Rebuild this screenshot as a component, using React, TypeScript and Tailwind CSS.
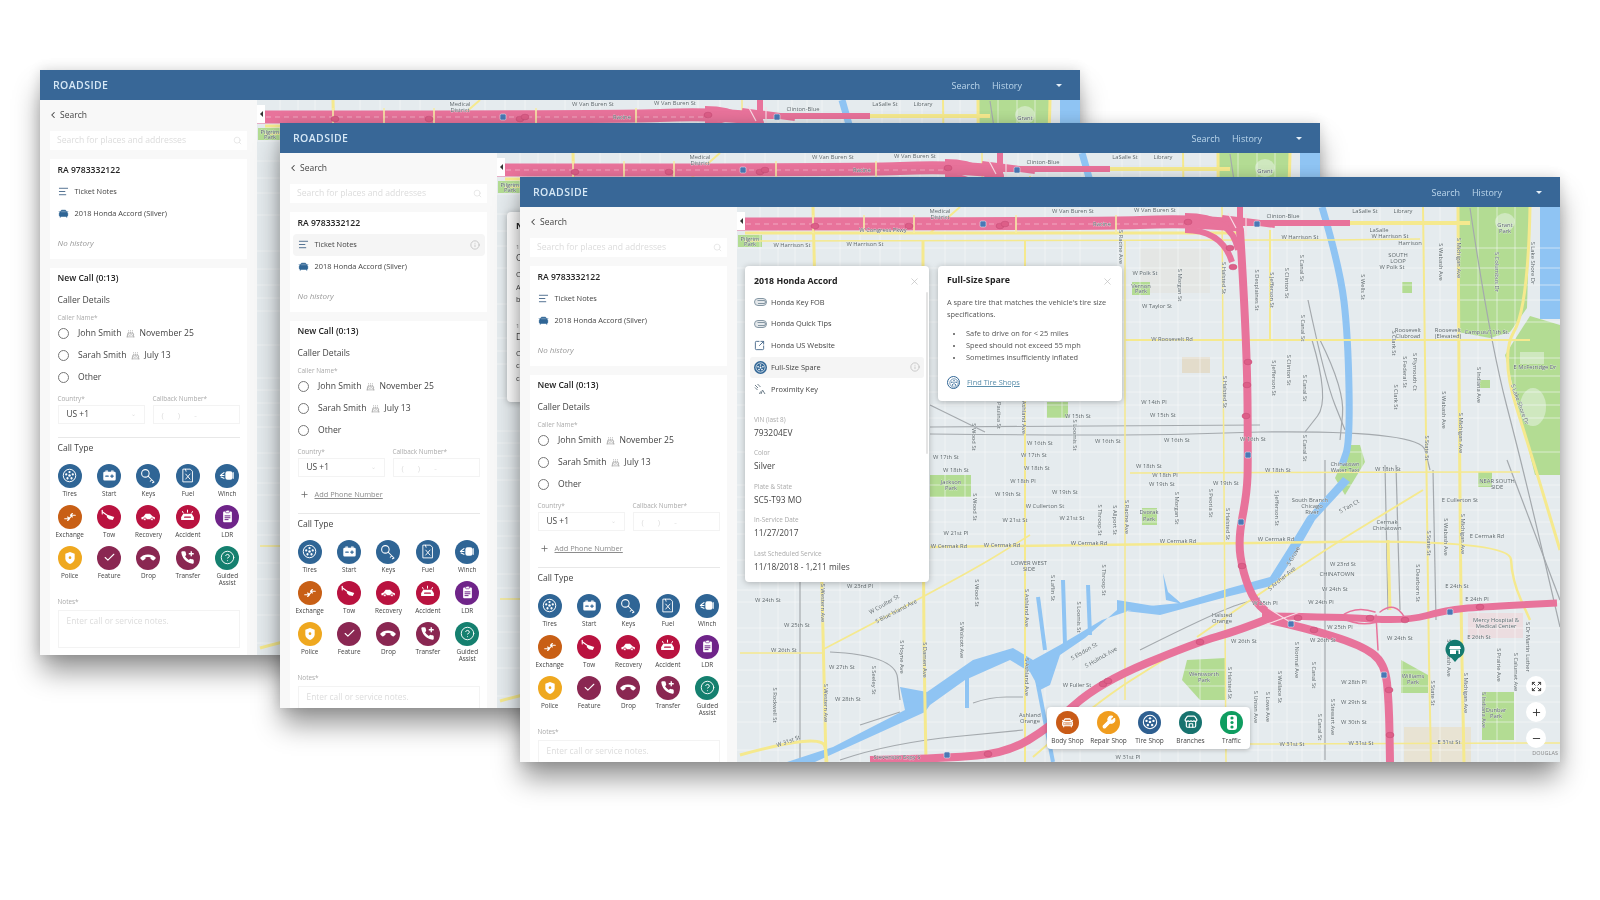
import React from 'react';
import { AlignLeft, CarFront, Cake, ChevronLeft, Check, CircleHelp, Expand, Minus, Plus, Search, Store, SquareArrowOutUpRight, Wrench, X, Info } from 'lucide-react';

const PHONE = 'M22 16.9v3a2 2 0 0 1-2.2 2 19.8 19.8 0 0 1-8.6-3.1 19.5 19.5 0 0 1-6-6 19.8 19.8 0 0 1-3.1-8.7A2 2 0 0 1 4.1 2h3a2 2 0 0 1 2 1.7c.1 1 .4 1.9.7 2.8a2 2 0 0 1-.5 2.1L8.1 9.9a16 16 0 0 0 6 6l1.3-1.3a2 2 0 0 1 2.1-.4c.9.3 1.8.5 2.8.7a2 2 0 0 1 1.7 2z';

function smooth(pts: number[][]) {
  let d = `M${pts[0][0]} ${pts[0][1]}`;
  for (let i = 1; i < pts.length - 1; i++) {
    const mx = (pts[i][0] + pts[i + 1][0]) / 2;
    const my = (pts[i][1] + pts[i + 1][1]) / 2;
    d += ` Q${pts[i][0]} ${pts[i][1]} ${mx} ${my}`;
  }
  const last = pts[pts.length - 1];
  return `${d} L${last[0]} ${last[1]}`;
}

// all map geometry uses the page coordinates of the front window
const WHITE_V = [760, 778, 795, 840, 860, 880, 900, 945, 965, 985, 1005, 1045, 1062, 1080, 1118, 1140, 1160, 1178, 1200, 1258, 1272, 1287, 1302, 1322, 1362, 1380, 1402, 1440, 1478, 1497, 1515];
const WHITE_H = [248, 268, 285, 300, 322, 358, 376, 392, 405, 418, 452, 485, 497, 510, 522, 534, 560, 575, 590, 602, 628, 642, 670, 686, 702, 722, 750];
const YELLOW: [number[][], number][] = [
  [[[745, 233], [1240, 233]], 3],
  [[[1350, 223], [1470, 223]], 4],
  [[[745, 241], [1240, 241], [1420, 239]], 1.5],
  [[[1125, 340], [1400, 340], [1530, 340]], 2],
  [[[930, 547], [1140, 545], [1510, 539], [1512, 580], [1530, 620]], 2.5],
  [[[1130, 473], [1440, 472], [1520, 472]], 1.5],
  [[[1458, 207], [1460, 560], [1464, 762]], 3],
  [[[1222, 207], [1226, 762]], 1.5],
  [[[1423, 207], [1427, 560], [1431, 762]], 2],
  [[[813, 207], [822, 590], [826, 762]], 3],
  [[[923, 240], [923, 590], [926, 762]], 3],
  [[[960, 207], [930, 233]], 2],
  [[[1025, 240], [1025, 762]], 2],
  [[[1125, 240], [1125, 700]], 1.5],
  [[[1270, 230], [1270, 340]], 2],
  [[[1530, 207], [1528, 308], [1500, 355], [1533, 460], [1560, 550]], 3],
  [[[740, 755], [823, 732], [827, 762]], 3],
  [[[822, 650], [960, 578], [1030, 535]], 1.5],
  [[[740, 653], [825, 653]], 1.5],
  [[[1197, 637], [1303, 563], [1423, 490]], 2],
  [[[1033, 757], [1095, 703], [1168, 657]], 2],
  [[[1250, 744], [1560, 743]], 1.5],
  [[[1388, 540], [1390, 610]], 3],
];
const RAIL: number[][][] = [
  [[930, 427], [1260, 425]],
  [[930, 434], [1120, 436], [1260, 432]],
  [[930, 405], [985, 432]],
  [[1140, 650], [1220, 610], [1260, 598]],
  [[1325, 460], [1325, 760]],
  [[1385, 465], [1388, 610]],
  [[1396, 465], [1400, 610]],
  [[1433, 470], [1436, 620]],
  [[1470, 208], [1490, 342], [1523, 468], [1560, 627]],
  [[1507, 460], [1560, 600]],
  [[1308, 300], [1325, 380], [1345, 430]],
  [[1312, 340], [1330, 400], [1305, 432]],
  [[1320, 340], [1345, 390], [1340, 440]],
  [[800, 580], [800, 760]],
  [[840, 760], [890, 743], [1023, 730]],
  [[860, 725], [900, 712]],
  [[973, 703], [990, 697], [1023, 697]],
  [[830, 652], [895, 655], [900, 700]],
  [[1260, 432], [1420, 430], [1430, 470]],
];
const BLUE: number[][][] = [
  [[1322, 207], [1340, 268], [1348, 335], [1350, 442], [1342, 465]],
  [[1038, 597], [1045, 650]],
  [[1063, 580], [1065, 645]],
  [[1088, 585], [1090, 635]],
  [[967, 677], [967, 708]],
  [[1037, 680], [1053, 762]],
];
const LABELS: [number, number, string, number?][] = [
  [1155, 212, 'W Van Buren St'], [1073, 213, 'W Van Buren St'], [940, 213, 'Medical'], [940, 219, 'District'], [1102, 226, 'Racine'], [1403, 213, 'Library'], [1365, 213, 'LaSalle St'], [883, 232, 'W Congress Pkwy'], [792, 247, 'W Harrison St'], [865, 246, 'W Harrison St'], [1283, 218, 'Clinton-Blue'], [1300, 239, 'W Harrison St'], [1390, 238, 'W Harrison St'], [1379, 232, 'LaSalle'], [1410, 245, 'Harrison'], [1398, 257, 'SOUTH'], [1398, 263, 'LOOP'], [1392, 269, 'W Polk St'], [1145, 275, 'W Polk St'], [1157, 308, 'W Taylor St'], [1172, 341, 'W Roosevelt Rd'], [1408, 332, 'Roosevelt'], [1408, 338, 'Clubroad'], [1448, 332, 'Roosevelt'], [1448, 338, '(Elevated)'], [1487, 334, 'Campus/11th St.'], [1535, 369, 'E McFetridge Dr'], [1505, 227, 'Grant'], [1505, 233, 'Park'], [1154, 404, 'W 14th Pl'], [1163, 417, 'W 15th St'], [1177, 442, 'W 16th St'], [1253, 441, 'W 16th St'], [1149, 468, 'W 18th St'], [1278, 472, 'W 18th St'], [1388, 471, 'W 18th St'],
  [1119, 247, 'S Racine Ave', 90], [1178, 285, 'S Morgan St', 90], [1222, 278, 'S Halsted St', 90], [1255, 290, 'S Desplaines St', 90], [1270, 290, 'S Jefferson St', 90], [1285, 283, 'S Clinton St', 90], [1300, 268, 'S Canal St', 90], [1361, 287, 'S Wells St', 90], [1439, 262, 'S Wabash Ave', 90], [1457, 258, 'S Michigan Ave', 90], [1495, 272, 'S Columbus Dr', 90], [1531, 263, 'S Lake Shore Dr', 90], [1301, 328, 'S Canal St', 90], [1303, 388, 'S Canal St', 90], [1223, 392, 'S Halsted St', 90], [1272, 378, 'S Jefferson St', 90], [1287, 370, 'S Clinton St', 90], [1392, 343, 'S Clark St', 90], [1403, 372, 'S Federal St', 90], [1413, 372, 'S Plymouth Ct', 90], [1394, 397, 'S Clark St', 90], [1442, 410, 'S Wabash Ave', 90], [1459, 433, 'S Michigan Ave', 90], [1425, 448, 'S State St', 90], [1477, 385, 'S Indiana Ave', 90], [1518, 405, 'S Lake Shore Dr', 70], [1303, 448, 'S Canal St', 90],
  [1078, 418, 'W 15th St'], [1040, 445, 'W 16th St'], [1108, 443, 'W 16th St'], [946, 459, 'W 17th St'], [1034, 457, 'W 17th St'], [956, 472, 'W 18th St'], [1037, 470, 'W 18th St'], [1023, 483, 'W 18th Pl'], [1008, 496, 'W 19th St'], [1065, 494, 'W 19th St'], [1045, 508, 'W Cullerton St'], [1015, 522, 'W 21st St'], [1072, 520, 'W 21st St'], [956, 535, 'W 21st Pl'], [949, 548, 'W Cermak Rd'], [1002, 547, 'W Cermak Rd'], [1089, 545, 'W Cermak Rd'], [1029, 565, 'LOWER WEST'], [1029, 571, 'SIDE'], [860, 588, 'W 23rd Pl'], [972, 437, 'S Wood St', 90], [973, 507, 'S Wood St', 90], [997, 413, 'S Paulina St', 90], [1022, 415, 'S Ashland Ave', 90], [1073, 435, 'S Loomis St', 90], [1098, 520, 'S Throop St', 90], [1113, 520, 'S Allport St', 90], [1125, 517, 'S Racine Ave', 90], [1102, 580, 'S Throop St', 90], [1051, 588, 'S Laflin St', 90],
  [768, 602, 'W 24th St'], [797, 627, 'W 25th St'], [784, 652, 'W 26th St'], [842, 669, 'W 27th St'], [848, 701, 'W 28th St'], [789, 743, 'W 31st St', -20], [885, 606, 'W Coulter St', -30], [897, 613, 'S Blue Island Ave', -27], [824, 703, 'S Western Ave', 90], [821, 603, 'S Western Ave', 90], [923, 660, 'S Damen Ave', 90], [900, 657, 'S Hoyne Ave', 90], [872, 680, 'S Seeley St', 90], [773, 705, 'S Rockwell St', 90], [1025, 608, 'S Ashland Ave', 90], [1025, 677, 'S Ashland Ave', 90], [960, 640, 'S Wolcott Ave', 90], [975, 593, 'S Wood St', 90], [1077, 617, 'S Loomis St', 90], [1085, 653, 'S Elsdon St', -30], [1102, 659, 'S Holinck Ave', -30], [1077, 687, 'W Fuller St'], [1030, 717, 'Ashland'], [1030, 723, 'Orange'], [897, 759, 'Stevenson Expy S'],
  [1165, 477, 'W 18th Pl'], [1162, 486, 'W 19th St'], [1226, 485, 'W 19th St'], [1175, 508, 'S Morgan St', 90], [1209, 503, 'S Peoria St', 90], [1226, 524, 'S Halsted St', 90], [1275, 508, 'S Jefferson St', 90], [1149, 514, 'Dvorak'], [1149, 521, 'Park'], [1178, 543, 'W Cermak Rd'], [1276, 541, 'W Cermak Rd'], [1487, 538, 'E Cermak Rd'], [1460, 502, 'E Cullerton St'], [1497, 483, 'NEAR SOUTH'], [1497, 489, 'SIDE'], [1350, 508, 'S Tan Ct', -30], [1387, 524, 'Cermak'], [1387, 530, 'Chinatown'], [1427, 543, 'S State St', 90], [1444, 537, 'S Wabash Ave', 90], [1461, 534, 'S Michigan Ave', 90], [1343, 566, 'W 23rd St'], [1337, 576, 'CHINATOWN'], [1335, 591, 'W 24th St'], [1457, 588, 'E 24th St'], [1477, 601, 'E 24th Pl'], [1265, 605, 'W 25th Pl'], [1321, 604, 'W 24th Pl'], [1340, 629, 'W 25th Pl'], [1244, 643, 'W 26th St'], [1323, 642, 'W 26th St'], [1400, 640, 'W 24th St'], [1479, 639, 'E 26th St'], [1416, 583, 'S Dearborn St', 90], [1283, 580, 'S Archer Ave', -40], [1295, 557, 'S Grove', -60], [1222, 617, 'Halsted'], [1222, 623, 'Orange'], [1496, 622, 'Mercy Hospital &'], [1496, 628, 'Medical Center'],
  [1354, 684, 'W 28th Pl'], [1354, 704, 'W 29th St'], [1354, 724, 'W 30th St'], [1292, 746, 'W 31st St'], [1361, 745, 'W 31st St'], [1449, 744, 'E 31st St'], [1128, 759, 'W 31st Pl'], [1228, 683, 'S Halsted St', 90], [1266, 707, 'S Lowe Ave', 90], [1254, 707, 'S Union Ave', 90], [1295, 660, 'S Normal Ave', 90], [1312, 675, 'S Canal St', 90], [1331, 717, 'S Stewart Ave', 90], [1318, 727, 'S Canal St', 90], [1278, 687, 'S Wallace St', 90], [1464, 693, 'S Michigan Ave', 90], [1431, 693, 'S State St', 90], [1482, 710, 'S Indiana Ave', 90], [1447, 658, 'S Wabash Ave', 90], [1497, 665, 'S Prairie Ave', 90], [1514, 672, 'S Calumet Ave', 90], [1526, 647, 'S Dr Martin Luther', 90], [1413, 678, 'Williams'], [1413, 684, 'Park'], [1496, 712, 'Dunbar'], [1496, 718, 'Park'], [1204, 676, 'Wentworth'], [1204, 682, 'Park'], [750, 241, 'Pilgrim'], [750, 246, 'Park'], [951, 484, 'Jackson'], [951, 490, 'Park'], [1141, 288, 'Vernon'], [1141, 293, 'Park'],
  [1345, 466, 'Chinatown'], [1345, 472, 'Water Taxi'], [1310, 502, 'South Branch'], [1312, 508, 'Chicago'], [1312, 514, 'River'],
];
const SHIELDS: [number, number][] = [[1188, 222], [1230, 248], [1233, 267], [1248, 362], [1247, 385], [1246, 416], [1242, 566], [1298, 618], [1370, 618], [1405, 620], [1480, 607], [1314, 630], [1200, 642], [1103, 684], [1390, 735], [1389, 690], [988, 754], [1108, 681], [1000, 226], [909, 226], [815, 226], [1005, 224]];
const BLUE_SHIELDS: [number, number][] = [[1257, 224], [1248, 455], [1241, 522], [1291, 624], [1450, 612], [1384, 675], [947, 755], [983, 224]];
const PARKS: number[][][] = [
  [[738, 235], [762, 235], [762, 247], [738, 247]], [[1132, 282], [1150, 282], [1150, 295], [1132, 295]], [[1402, 282], [1412, 282], [1412, 293], [1402, 293]], [[1047, 402], [1068, 402], [1068, 418], [1047, 418]], [[930, 475], [971, 475], [971, 497], [930, 497]], [[1142, 508], [1157, 508], [1157, 525], [1142, 525]], [[1478, 472], [1492, 472], [1492, 487], [1478, 487]], [[1187, 660], [1226, 658], [1226, 700], [1200, 700], [1182, 680]], [[1401, 660], [1428, 675], [1428, 693], [1401, 693]], [[1482, 692], [1514, 692], [1514, 740], [1482, 740]], [[1345, 495], [1365, 462], [1360, 445], [1350, 445], [1335, 478]], [[1480, 380], [1490, 380], [1490, 388], [1480, 388]],
  [[1458, 207], [1530, 207], [1527, 308], [1510, 332], [1490, 338], [1458, 332]], [[1530, 316], [1560, 325], [1560, 475], [1535, 475], [1505, 355]],
];

function MapCanvas({ front }: { front: boolean }) {
  // windows further back only show the top strip and a sliver on the left
  const labels = front ? LABELS : LABELS.filter(([x, y]) => y < 232 || x < 757);
  return (
    <svg className="absolute top-0 left-0 w-[823px] h-[555px]" viewBox="737 207 823 555" fill="none" fontFamily="'Open Sans', sans-serif">
      <rect x="737" y="207" width="823" height="555" fill="#e5ebee" />
      <rect x="1540" y="207" width="20" height="112" fill="#8fc4f3" />
      <rect x="1468" y="613" width="55" height="25" fill="#ecdde0" />
      <rect x="1404" y="727" width="67" height="35" fill="#e8e3d3" />
      <rect x="1182" y="357" width="28" height="16" fill="#e3dccb" />
      <rect x="1140" y="248" width="70" height="45" fill="#e2e3dd" opacity="0.6" />
      {PARKS.map((p, i) => (
        <polygon key={i} points={p.map(q => q.join(',')).join(' ')} fill="#b3dc93" />
      ))}
      <ellipse cx="1533" cy="407" rx="13" ry="19" fill="#cfe8bf" />
      <ellipse cx="1505" cy="222" rx="10" ry="9" fill="#cfe8bf" />
      <rect x="1520" y="352" width="24" height="12" fill="#cfe8bf" />
      {WHITE_V.map(x => <path key={x} d={`M${x} 207V762`} stroke="#fafcfc" strokeOpacity="0.7" strokeWidth="0.8" />)}
      {WHITE_H.map(y => <path key={y} d={`M737 ${y}H1560`} stroke="#fafcfc" strokeOpacity="0.7" strokeWidth="0.8" />)}
      {RAIL.map((r, i) => <path key={i} d={smooth(r)} stroke="#a4a9ad" strokeWidth="1.2" />)}
      {BLUE.map((b, i) => <path key={i} d={smooth(b)} stroke="#8fc4f3" strokeWidth={i === 0 ? 7 : 4} />)}
      <path d="M1343 477L1307 517L1287 550L1270 577L1230 588L1180 603L1140 607L1102 620L1060 645L1033 660L1013 648L973 660L927 692L900 687L905 710L833 747L787 762L815 762L925 712L930 705L965 680L1010 660L1030 672L1040 690L1050 685L1060 655L1085 638L1117 610L1160 615L1230 596L1275 585L1295 555L1315 520L1350 482Z" fill="#8fc4f3" />
      <path d="M1163 573L1166 600L1182 604L1168 592Z" fill="#8fc4f3" />
      <path d="M1117 600L1160 607L1117 612Z" fill="#8fc4f3" />
      {YELLOW.map(([r, w], i) => <path key={i} d={smooth(r)} stroke="#f5e98e" strokeWidth={w} />)}
      <g stroke="#e8739b" strokeLinejoin="round" strokeLinecap="round">
        <path d={smooth([[737, 224], [1100, 224], [1180, 221], [1240, 225]])} strokeWidth="13" strokeLinecap="butt" />
        <path d="M1240 223H1350" strokeWidth="6" strokeLinecap="butt" />
        <path d="M1185 216Q1232 216 1238 250M1185 230Q1222 230 1232 262M1240 207V250M1275 225L1222 218" strokeWidth="6" strokeLinecap="butt" />
        <path d={smooth([[1240, 230], [1247, 342], [1248, 460], [1247, 493], [1238, 540], [1243, 573], [1255, 603], [1275, 618]])} strokeWidth="8" />
        <path d={smooth([[1262, 616], [1340, 617], [1407, 621], [1447, 610], [1480, 607], [1557, 603]])} strokeWidth="7" strokeLinecap="butt" />
        <path d={smooth([[1270, 618], [1240, 630], [1195, 643], [1099, 683], [1050, 727], [1007, 753], [947, 758], [870, 760]])} strokeWidth="8" strokeLinecap="butt" />
        <path d={smooth([[1270, 620], [1306, 628], [1361, 645], [1385, 663], [1389, 703], [1390, 762]])} strokeWidth="8" strokeLinecap="butt" />
        <path d="M1340 617Q1355 605 1375 612M1340 617Q1365 630 1385 618M1380 612Q1395 600 1405 618M1378 650L1376 615" strokeWidth="1.5" />
      </g>
      <path d="M737 224H1190" stroke="#f4b6cb" strokeWidth="0.8" strokeDasharray="5 4" />
      <path d="M1228 213L1236 228M1246 214L1246 236M1268 608L1290 622M1265 625L1300 612" stroke="#f8dbe5" strokeWidth="1.2" />
      <path d="M813 215V233M864 215V233M914 215V233M1016 215V233M1116 215V233" stroke="#f7eda6" strokeWidth="1.6" />
      {SHIELDS.map(([x, y]) => <ellipse key={`${x}-${y}`} cx={x} cy={y} rx="4" ry="2.8" fill="#dd5e88" stroke="#c34a74" strokeWidth="0.5" />)}
      {BLUE_SHIELDS.map(([x, y]) => <rect key={`${x}-${y}`} x={x - 3} y={y - 3} width="6" height="6" rx="1.5" fill="#4a78b5" stroke="#dfe7f2" strokeWidth="0.6" />)}
      <g fontSize="5.8" fill="#5c666b" textAnchor="middle">
        {labels.map(([x, y, t, r]) => (
          <text key={`${x}-${y}-${t}`} x={x} y={y} stroke="#eef2f3" strokeWidth="0.4" paintOrder="stroke" transform={r ? `rotate(${r} ${x} ${y})` : undefined}>{t}</text>
        ))}
      </g>
    </svg>
  );
}

function Wheel({ fg = '#fff', size = 15 }: { fg?: string; size?: number }) {
  const spokes = [0, 72, 144, 216, 288];
  return (
    <svg width={size} height={size} viewBox="0 0 24 24" fill="none">
      <circle cx="12" cy="12" r="10" stroke={fg} strokeWidth="1.6" />
      <circle cx="12" cy="12" r="2" fill={fg} />
      {spokes.map(a => <circle key={a} cx="12" cy="6.5" r="1.8" fill={fg} transform={`rotate(${a} 12 12)`} />)}
    </svg>
  );
}

function Glyph({ children, size = 15 }: { children: React.ReactNode; size?: number }) {
  return <svg width={size} height={size} viewBox="0 0 24 24" fill="none" stroke="#fff" strokeWidth="1.8" strokeLinecap="round" strokeLinejoin="round">{children}</svg>;
}

const CAR_SIDE = 'M2 16v-3l3-1 3-4h6l4 4 3 1v3z';

const TILES: { label: string; color: string; icon: React.ReactNode }[] = [
  { label: 'Tires', color: 'bg-[#2f6595]', icon: <Wheel /> },
  { label: 'Start', color: 'bg-[#2f6595]', icon: <Glyph><rect x="3" y="7" width="18" height="12" rx="1" fill="#fff" /><path d="M6 5h3M15 5h3" /><path d="M6 13h4M14 13h4M16 11v4" stroke="#2f6595" /></Glyph> },
  { label: 'Keys', color: 'bg-[#2f6595]', icon: <Glyph size={18}><circle cx="8.5" cy="8.5" r="5" strokeWidth="1.4" /><path d="M12 12l8 8M17 17l-2 2M20 20l-2 1" strokeWidth="1.4" /></Glyph> },
  { label: 'Fuel', color: 'bg-[#2f6595]', icon: <Glyph size={17}><path d="M6 3h10l3 3v15H6zM9 3l1 3" strokeWidth="1.3" /><path d="M9.500 10l6 7M15.500 10l-6 7" strokeWidth="1.3" /></Glyph> },
  { label: 'Winch', color: 'bg-[#2f6595]', icon: <Glyph size={17}><rect x="9" y="6" width="10" height="12" rx="3" fill="#fff" stroke="none" /><path d="M7 8L3 11M7 12H2M7 16l-4-2M20 8v8" strokeWidth="1.6" /></Glyph> },
  { label: 'Exchange', color: 'bg-[#c85f15]', icon: <Glyph size={14}><path d="M3 15h7M10 15l3-3M13 9h8M8 12l3 3-3 3M16 6l-3 3 3 3" strokeWidth="2" /></Glyph> },
  { label: 'Tow', color: 'bg-[#b9123f]', icon: <Glyph size={18}><path d="M3 5l7 5" strokeWidth="1.4" /><path d="M3 3v5" strokeWidth="1.4" /><path d="M10 9l9 3-2 4-5-1-3-3z" fill="#fff" stroke="none" /></Glyph> },
  { label: 'Recovery', color: 'bg-[#b9123f]', icon: <Glyph size={17}><path d={CAR_SIDE} fill="#fff" stroke="none" /><circle cx="7" cy="16" r="2" fill="#fff" stroke="#b9123f" strokeWidth="1" /><circle cx="17" cy="16" r="2" fill="#fff" stroke="#b9123f" strokeWidth="1" /></Glyph> },
  { label: 'Accident', color: 'bg-[#b9123f]', icon: <Glyph size={17}><path d="M3 17v-4l3-5h12l3 5v4z" fill="#fff" stroke="none" /><path d="M8 13h8" stroke="#b9123f" /><path d="M5 5l1 2M12 3v3M19 5l-1 2" strokeWidth="1.4" /></Glyph> },
  { label: 'LDR', color: 'bg-[#6f2489]', icon: <Glyph size={15}><rect x="5" y="4" width="14" height="17" rx="1.500" fill="#fff" stroke="none" /><rect x="9" y="2" width="6" height="4" rx="1" fill="#fff" stroke="#6f2489" strokeWidth="1" /><path d="M8 11h8M8 14h8M8 17h5" stroke="#6f2489" strokeWidth="1.6" /></Glyph> },
  { label: 'Police', color: 'bg-[#efa81f]', icon: <Glyph size={16}><path d="M12 3l7 2.500V13c0 4-4 6.500-7 8-3-1.500-7-4-7-8V5.500z" fill="#fff" stroke="none" /><circle cx="12" cy="11.500" r="2" fill="#efa81f" stroke="none" /></Glyph> },
  { label: 'Feature', color: 'bg-[#8a2752]', icon: <Check size={13} color="#fff" strokeWidth={2} /> },
  { label: 'Drop', color: 'bg-[#8a2752]', icon: <svg width="14" height="14" viewBox="0 0 24 24" fill="#fff" className="rotate-[135deg]"><path d={PHONE} /></svg> },
  { label: 'Transfer', color: 'bg-[#8a2752]', icon: <svg width="15" height="15" viewBox="0 0 24 24" fill="#fff"><path d={PHONE} /><path d="M18 2v8M14 6h8" stroke="#fff" strokeWidth="2.2" /></svg> },
  { label: 'Guided Assist', color: 'bg-[#15806f]', icon: <CircleHelp size={15} color="#fff" strokeWidth={1.5} /> },
];

const DOCK: { label: string; color: string; icon: React.ReactNode }[] = [
  { label: 'Body Shop', color: 'bg-[#c95b17]', icon: <CarFront size={13} color="#fff" fill="#fff" fillOpacity={0.55} /> },
  { label: 'Repair Shop', color: 'bg-[#f09d1f]', icon: <Wrench size={14} color="#fff" fill="#fff" /> },
  { label: 'Tire Shop', color: 'bg-[#2e5f90]', icon: <Wheel size={16} /> },
  { label: 'Branches', color: 'bg-[#17736f]', icon: <Store size={14} color="#fff" /> },
  { label: 'Traffic', color: 'bg-[#0f9d60]', icon: <svg width="10" height="15" viewBox="0 0 10 15"><rect width="10" height="15" rx="3" fill="#fff" /><circle cx="5" cy="3" r="1.600" fill="#0f9d60" /><circle cx="5" cy="7.500" r="1.600" fill="#0f9d60" /><circle cx="5" cy="12" r="1.600" fill="#0f9d60" /></svg> },
];

function Radio({ children }: { children: React.ReactNode }) {
  return (
    <div className="flex items-center h-[21.7px]">
      <span className="w-[11px] h-[11px] rounded-full border border-[#777] bg-white" />
      <span className="ml-[9.500px] flex items-center gap-[4.500px] text-[8.600px] text-[#444]">{children}</span>
    </div>
  );
}

function Birthday({ name, date }: { name: string; date: string }) {
  return (
    <>
      <span>{name}</span>
      <Cake size={9} color="#a9a9a9" />
      <span>{date}</span>
    </>
  );
}

function Sidebar({ ticketActive = false, withAddPhone = true }: { ticketActive?: boolean; withAddPhone?: boolean }) {
  return (
    <aside className="w-[217px] shrink-0 bg-[#f8f8f8] px-[10px] overflow-hidden flex flex-col">
      <div className="mt-[8px] h-[14px] shrink-0 flex items-center gap-[2px] text-[8.500px] text-[#444]">
        <ChevronLeft size={10} strokeWidth={2.5} className="-ml-[2px]" />
        Search
      </div>
      <div className="mt-[9px] h-[19px] shrink-0 bg-white flex items-center justify-between pl-[7px] pr-[5px] text-[8.600px] text-[#dcdcdc]">
        Search for places and addresses
        <Search size={9} color="#e2e2e2" />
      </div>
      <section className="mt-[9px] h-[100px] shrink-0 bg-white px-[7.500px]">
        <div className="h-[22px] flex items-center text-[8.600px] font-semibold text-[#222]">RA 9783332122</div>
        <div className={`-mx-[5px] px-[5px] h-[21.700px] flex items-center gap-[6px] text-[7.400px] text-[#444] rounded-[4px] ${ticketActive ? 'bg-[#f5f5f5]' : ''}`}>
          <AlignLeft size={11} color="#47688a" />
          <span className="flex-1">Ticket Notes</span>
          {ticketActive && <Info size={10} color="#c2c2c2" />}
        </div>
        <div className="-mx-[5px] px-[5px] h-[21px] flex items-center gap-[6px] text-[7.400px] text-[#444]">
          <CarFront size={11} color="#2f6595" fill="#2f6595" />
          2018 Honda Accord (Silver)
        </div>
        <div className="mt-[14px] text-[8px] italic text-[#999] leading-[10px]">No history</div>
      </section>
      <section className="mt-[9px] flex-1 shrink-0 bg-white px-[7.500px]">
        <div className="h-[20px] flex items-center text-[8.600px] font-semibold text-[#222]">New Call (0:13)</div>
        <div className="h-[24px] flex items-center text-[8.600px] text-[#444]">Caller Details</div>
        <div className="h-[11px] flex items-center text-[6.400px] text-[#aaa]">Caller Name*</div>
        <Radio><Birthday name="John Smith" date="November 25" /></Radio>
        <Radio><Birthday name="Sarah Smith" date="July 13" /></Radio>
        <Radio><span>Other</span></Radio>
        <div className="mt-[6px] grid grid-cols-[95px_1fr] gap-x-0">
          <span className="h-[10px] flex items-center text-[6.400px] text-[#aaa]">Country*</span>
          <span className="h-[10px] flex items-center text-[6.400px] text-[#aaa]">Callback Number*</span>
          <div className="mt-[1px] mr-[8px] h-[19px] border border-[#f3f3f3] flex items-center justify-between px-[8px] text-[8.400px] text-[#444]">
            US +1 <span className="text-[6px] text-[#ddd]">⌄</span>
          </div>
          <div className="mt-[1px] h-[19px] border border-[#f3f3f3] flex items-center pl-[8px] gap-[14px] text-[8px] text-[#ddd]">
            <span>(</span><span>)</span><span>-</span>
          </div>
        </div>
        {withAddPhone && (
          <div className="mt-[10px] h-[14px] flex items-center gap-[6px] text-[7.400px] text-[#8c8c8c] underline pl-[2px]">
            <Plus size={9} color="#666" />
            Add Phone Number
          </div>
        )}
        <div className={`${withAddPhone ? 'mt-[12px]' : 'mt-[13px]'} h-px bg-[#e8e8e8]`} />
        <div className="mt-[3px] h-[14px] flex items-center text-[8.600px] text-[#444]">Call Type</div>
        <div className="-mx-[7.500px] mt-[8.700px] grid grid-cols-5 auto-rows-[41px]">
          {TILES.map(t => (
            <div key={t.label} className="flex flex-col items-center">
              <span className={`w-[24px] h-[24px] shrink-0 rounded-full flex items-center justify-center ${t.color}`}>{t.icon}</span>
              <span className="mt-[3px] w-[34px] whitespace-normal text-center text-[6.400px] leading-[6.800px] text-[#444]">{t.label}</span>
            </div>
          ))}
        </div>
        <div className="mt-[10px] h-[10px] flex items-center text-[6.400px] text-[#aaa]">Notes*</div>
        <div className="mt-[3px] h-[38px] border border-[#f3f3f3] px-[8px] py-[4px] text-[8.400px] text-[#dcdcdc]">Enter call or service notes.</div>
      </section>
    </aside>
  );
}

function CloseButton() {
  return <X size={11} color="#bdbdbd" strokeWidth={1.5} />;
}

function Clip() {
  return (
    <svg width="13" height="8" viewBox="0 0 13 8" fill="none" stroke="#8496a3" strokeWidth="1">
      <rect x="0.500" y="0.500" width="12" height="7" rx="3.500" fill="#e4e8eb" />
      <path d="M3.500 2.500h6.500a1.500 1.500 0 0 1 0 3H4" />
    </svg>
  );
}

const VEHICLE_LINKS: { label: string; icon: React.ReactNode; active?: boolean }[] = [
  { label: 'Honda Key FOB', icon: <Clip /> },
  { label: 'Honda Quick Tips', icon: <Clip /> },
  { label: 'Honda US Website', icon: <SquareArrowOutUpRight size={11} color="#47688a" /> },
  { label: 'Full-Size Spare', icon: <span className="w-[13px] h-[13px] rounded-full bg-[#2f6595] flex items-center justify-center"><Wheel size={11} /></span>, active: true },
  { label: 'Proximity Key', icon: <svg width="12" height="12" viewBox="0 0 24 24" fill="none" stroke="#70808c" strokeWidth="2"><path d="M2 4l6 6M7 2l6 6M2 9l5 5M14 22l3-8 5 8M11 22l2-5" /></svg> },
];

const VEHICLE_FACTS = [
  ['VIN (last 8)', '793204EV'],
  ['Color', 'Silver'],
  ['Plate & State', 'SC5-T93 MO'],
  ['In-Service Date', '11/27/2017'],
  ['Last Scheduled Service', '11/18/2018 - 1,211 miles'],
];

function VehiclePopup() {
  return (
    <div className="absolute left-[8px] top-[59px] w-[184px] h-[316px] bg-white rounded-[4px] shadow-[0_1px_6px_rgba(0,0,0,0.25)] px-[9px]">
      <div className="h-[25.500px] pt-[5px] flex items-center justify-between text-[8.800px] font-bold text-[#222]">
        2018 Honda Accord
        <CloseButton />
      </div>
      <ul className="-mx-[4px]">
        {VEHICLE_LINKS.map(l => (
          <li key={l.label} className={`h-[21.700px] px-[4px] flex items-center rounded-[3px] text-[7.400px] text-[#444] ${l.active ? 'bg-[#f5f5f5]' : ''}`}>
            <span className="w-[17px] flex items-center">{l.icon}</span>
            <span className="flex-1">{l.label}</span>
            {l.active && <Info size={10} color="#c2c2c2" />}
          </li>
        ))}
      </ul>
      <dl className="mt-[15px]">
        {VEHICLE_FACTS.map(([k, v]) => (
          <div key={k} className="h-[33.500px]">
            <dt className="text-[6.400px] leading-[10px] text-[#aaa]">{k}</dt>
            <dd className="mt-[1px] text-[8.400px] leading-[13px] text-[#444]">{v}</dd>
          </div>
        ))}
      </dl>
      <span className="absolute right-[1px] top-[26px] w-[2px] h-[162px] rounded-full bg-[#e4e4e4]" />
    </div>
  );
}

function SparePopup() {
  return (
    <div className="absolute left-[201px] top-[59px] w-[184px] h-[135px] bg-white rounded-[4px] shadow-[0_1px_6px_rgba(0,0,0,0.25)] px-[9px]">
      <div className="h-[30px] flex items-center justify-between text-[8.800px] font-bold text-[#222]">
        Full-Size Spare
        <CloseButton />
      </div>
      <p className="text-[7.400px] leading-[12px] text-[#555]">A spare tire that matches the vehicle's tire size specifications.</p>
      <ul className="mt-[8px] pl-[6px]">
        {['Safe to drive on for < 25 miles', 'Speed should not exceed 55 mph', 'Sometimes insufficiently inflated'].map(t => (
          <li key={t} className="h-[12px] flex items-center gap-[11px] text-[7.400px] text-[#555]">
            <span className="w-[2px] h-[2px] rounded-full bg-[#555]" />
            {t}
          </li>
        ))}
      </ul>
      <div className="mt-[12px] flex items-center gap-[7px]">
        <span className="w-[13px] h-[13px] rounded-full border border-[#2f6595] flex items-center justify-center"><Wheel size={10} fg="#2f6595" /></span>
        <span className="text-[7.400px] text-[#5a8eab] underline">Find Tire Shops</span>
      </div>
    </div>
  );
}

function NotesPopup() {
  return (
    <div className="absolute left-[10px] top-[59px] w-[184px] h-[190px] bg-white rounded-[4px] shadow-[0_1px_6px_rgba(0,0,0,0.25)] px-[9px] text-[7.400px] text-[#444]">
      <div className="h-[30px] flex items-center text-[8.800px] font-bold text-[#222]">Notes</div>
      <div className="text-[6px] leading-[8px] text-[#888] mt-[1px]">11/18/2018</div>
      <div className="text-[8.400px] leading-[13px]">Call</div>
      <p className="mt-[4px] leading-[12.500px]">Customer<br />At home<br />battery</p>
      <div className="mt-[16px] text-[6px] leading-[8px] text-[#888]">11/18/2018</div>
      <div className="text-[8.400px] leading-[13px]">Drop</div>
      <p className="mt-[4px] leading-[12.500px]">Customer<br />called<br />cancel</p>
    </div>
  );
}

function MapOverlays() {
  return (
    <>
      <div className="absolute left-[311px] top-[500px] w-[203px] h-[42px] bg-white rounded-[4px] shadow-[0_1px_4px_rgba(0,0,0,0.25)] grid grid-cols-[repeat(5,41px)] -ml-[1px] pt-[3.500px]">
        {DOCK.map(d => (
          <div key={d.label} className="flex flex-col items-center">
            <span className={`w-[23px] h-[23px] rounded-full flex items-center justify-center ${d.color}`}>{d.icon}</span>
            <span className="mt-[3px] whitespace-nowrap text-[6.500px] leading-[8px] text-[#444]">{d.label}</span>
          </div>
        ))}
      </div>
      <div className="absolute right-[14px] top-[469px] flex flex-col gap-[6px]">
        <span className="w-[20px] h-[20px] rounded-full bg-white flex items-center justify-center"><Expand size={11} color="#333" /></span>
        <span className="w-[20px] h-[20px] rounded-full bg-white flex items-center justify-center"><Plus size={11} color="#333" /></span>
        <span className="w-[20px] h-[20px] rounded-full bg-white flex items-center justify-center"><Minus size={11} color="#333" /></span>
      </div>
      <span className="absolute right-[2px] bottom-[5px] text-[5.500px] text-[#888]">DOUGLAS</span>
      <svg className="absolute left-[708px] top-[432px]" width="20" height="24" viewBox="0 0 20 24">
        <path d="M10 23l-3.500-4A9.500 9.500 0 1 1 13.500 19z" fill="#147a70" />
        <path d="M5 7h10l1 3H4zM5 10.500h10V15H5z" fill="#fff" />
        <rect x="11" y="11.500" width="2.500" height="3.500" fill="#147a70" />
      </svg>
    </>
  );
}

function Window({ className, ticketActive, withAddPhone, front = false, children }: { className: string; ticketActive?: boolean; withAddPhone?: boolean; front?: boolean; children?: React.ReactNode }) {
  return (
    <div className={`absolute w-[1040px] h-[585px] flex flex-col overflow-hidden bg-white shadow-[0_18px_26px_-2px_rgba(0,0,0,0.42),0_0_12px_rgba(0,0,0,0.14)] ${className}`}>
      <header className="h-[30px] shrink-0 bg-[#386797] flex items-center pt-[1px] pl-[13px] pr-[18px]">
        <span className="text-[10.500px] font-semibold tracking-[0.4px] text-[#d6e8f6]">ROADSIDE</span>
        <nav className="ml-auto flex items-center gap-[12px] text-[9px] text-[#bcd7ec]">
          <span>Search</span>
          <span>History</span>
          <span className="ml-[22px] w-0 h-0 border-x-[3px] border-x-transparent border-t-[3px] border-t-[#e6f0f8]" />
        </nav>
      </header>
      <div className="flex-1 flex min-h-0">
        <Sidebar ticketActive={ticketActive} withAddPhone={withAddPhone} />
        <main className="relative flex-1 overflow-hidden">
          <MapCanvas front={front} />
          <span className="absolute left-0 top-[5px] w-[8px] h-[18px] bg-white flex items-center justify-center">
            <span className="w-0 h-0 border-y-[3px] border-y-transparent border-r-[3px] border-r-[#333]" />
          </span>
          {children}
          {front && <MapOverlays />}
        </main>
      </div>
    </div>
  );
}

export default function App() {
  return (
    <div className="relative w-[1600px] h-[900px] overflow-hidden bg-white font-['Open_Sans',sans-serif] blur-[0.45px]">
      <Window className="left-[40px] top-[70px]" withAddPhone={false} />
      <Window className="left-[280px] top-[123px]" ticketActive>
        <NotesPopup />
      </Window>
      <Window className="left-[520px] top-[177px]" front>
        <VehiclePopup />
        <SparePopup />
      </Window>
    </div>
  );
}
